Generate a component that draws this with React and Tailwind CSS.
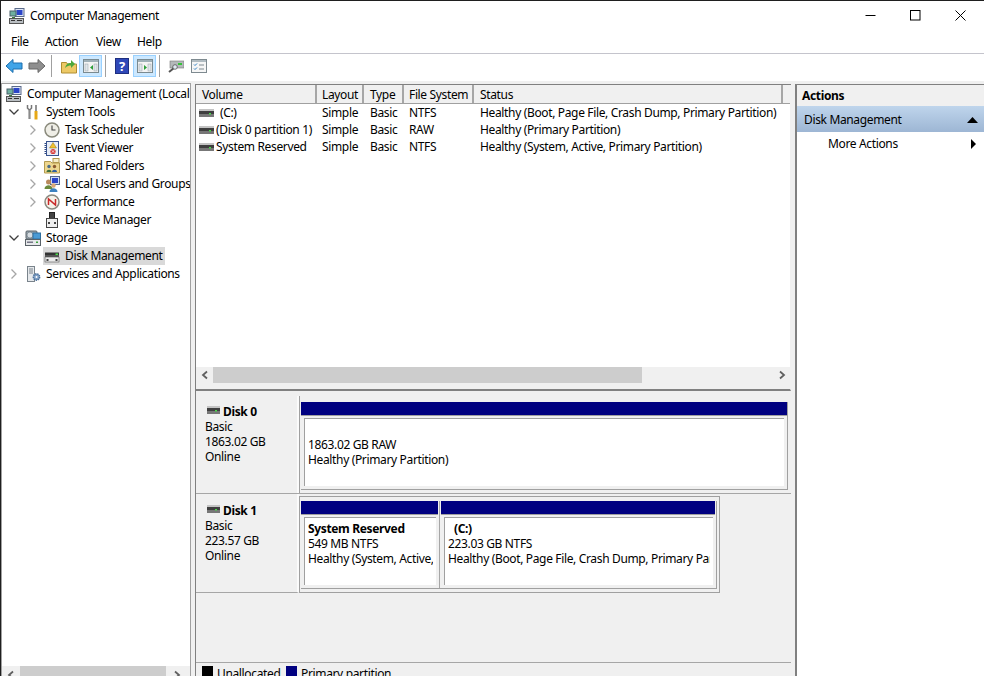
import React from "react";

const Svg = ({ w = 16, h = 16, children, className = "" }) => (
  <svg width={w} height={h} viewBox={`0 0 ${w} ${h}`} className={`shrink-0 ${className}`}>{children}</svg>
);

const CompIcon = () => (
  <Svg>
    <rect x="6" y="0.5" width="9" height="8" fill="#dfe6f5" stroke="#5a6a8a" />
    <rect x="7.5" y="2" width="6" height="5" fill="#2b45c8" />
    <rect x="1" y="3" width="6" height="5" fill="#6fb0a0" stroke="#48606a" />
    <path d="M3 9h3v2H3z" fill="#3a7d3a" />
    <rect x="0.5" y="10.5" width="14" height="5" fill="#b9bec2" stroke="#555" />
    <rect x="2" y="12" width="4" height="1" fill="#333" />
    <rect x="8" y="12" width="5" height="1" fill="#333" />
  </Svg>
);
const ToolsIcon = () => (
  <Svg>
    <path d="M2.5 1v3.2L4.5 6l2-1.8V1" fill="none" stroke="#777" strokeWidth="1.5" />
    <path d="M4.5 6v9" stroke="#8a8a8a" strokeWidth="2.2" />
    <path d="M11 1v6" stroke="#666" strokeWidth="1.4" />
    <path d="M11 7v8.5" stroke="#e6a817" strokeWidth="3" />
  </Svg>
);
const ClockIcon = () => (
  <Svg>
    <circle cx="8" cy="8" r="7" fill="#efeee6" stroke="#8a8a7c" strokeWidth="1.5" />
    <path d="M8 3.5V8h3.5" fill="none" stroke="#444" strokeWidth="1.1" />
  </Svg>
);
const ViewerIcon = () => (
  <Svg>
    <rect x="2.5" y="1.5" width="12" height="14" fill="#e8edf6" stroke="#3b568f" />
    <path d="M1.5 3v11" stroke="#2e4a86" strokeWidth="2" strokeDasharray="1 1" />
    <path d="M9 2.5l3.5 5.5h-7z" fill="#f2c230" stroke="#8f7012" strokeWidth="0.5" />
    <circle cx="9" cy="11.5" r="2.6" fill="#d73a3a" />
    <path d="M7.8 10.3l2.4 2.4m0-2.4l-2.4 2.4" stroke="#fff" strokeWidth="0.7" />
  </Svg>
);
const SharedIcon = () => (
  <Svg>
    <path d="M0.5 3.5h6l1.5 1.5h7.5v10H0.5z" fill="#eed78f" stroke="#b39a4f" />
    <rect x="9" y="0.5" width="6" height="4" fill="#f7edc8" stroke="#b39a4f" />
    <circle cx="5" cy="8.5" r="1.7" fill="#4a6d8a" />
    <path d="M2.5 14c0-3 5-3 5 0z" fill="#3d6f3d" />
    <circle cx="10.5" cy="8.5" r="1.7" fill="#8a5a30" />
    <path d="M8 14c0-3 5-3 5 0z" fill="#2f5f9f" />
  </Svg>
);
const UsersIcon = () => (
  <Svg>
    <rect x="6.5" y="0.5" width="9" height="8" fill="#cfdcf2" stroke="#54688c" />
    <rect x="8" y="2" width="6" height="5" fill="#2b45c8" />
    <circle cx="4.5" cy="6" r="2.5" fill="#b98a5c" />
    <path d="M0.5 13c0-5 8-5 8 0z" fill="#6b8a3c" />
    <circle cx="9.5" cy="9.5" r="2.2" fill="#d9a878" />
    <path d="M5.5 16c0-5 8-5 8 0z" fill="#3d83c0" />
  </Svg>
);
const PerfIcon = () => (
  <Svg>
    <circle cx="8" cy="8" r="7" fill="#f5f3ea" stroke="#8a8a80" strokeWidth="1.5" />
    <path d="M4.5 11V5l7 6V5" fill="none" stroke="#c92a2a" strokeWidth="1.5" />
  </Svg>
);
const DeviceIcon = () => (
  <Svg>
    <rect x="5.5" y="0.5" width="5" height="6" fill="#444" stroke="#222" />
    <rect x="2.5" y="6.5" width="11" height="9" fill="#eeeeee" stroke="#444" />
    <rect x="4" y="10" width="2" height="2" fill="#444" />
    <rect x="10" y="10" width="2" height="2" fill="#444" />
  </Svg>
);
const StorageIcon = () => (
  <Svg>
    <rect x="1" y="1" width="11" height="8" rx="1" fill="#9aa8b2" stroke="#5a6268" />
    <circle cx="5" cy="5" r="3" fill="#d7dde2" stroke="#66727a" strokeWidth="0.6" />
    <rect x="8" y="3" width="7.5" height="6" fill="#4a9ad4" stroke="#2f6f9f" />
    <rect x="0.5" y="9.5" width="15" height="6" fill="#e6e8ea" stroke="#5a6268" />
    <rect x="2" y="11.5" width="6" height="1.5" fill="#778" />
    <rect x="11" y="11.5" width="2" height="1.5" fill="#3fa33f" />
  </Svg>
);
const DiskIconLg = () => (
  <Svg>
    <path d="M1 4.5h14v5H1z" fill="#333" />
    <path d="M1 7h14v2H1z" fill="#555" />
    <rect x="1" y="9" width="14" height="5" fill="#ececec" stroke="#555" strokeWidth="0.6" />
    <rect x="11.5" y="5.5" width="2.5" height="1.5" fill="#4ade4a" />
    <rect x="2.5" y="11" width="2" height="2" fill="#444" />
    <rect x="11.5" y="11" width="2" height="2" fill="#444" />
  </Svg>
);
const ServicesIcon = () => (
  <Svg>
    <rect x="2.5" y="0.5" width="7" height="15" fill="#e6e9ec" stroke="#7a848c" />
    <path d="M4 3h4M4 5h4M4 7h4" stroke="#7a848c" />
    <circle cx="11.5" cy="11" r="3.2" fill="#7f9fc4" stroke="#4a6f9a" strokeDasharray="1.4 0.8" strokeWidth="1.4" />
    <circle cx="11.5" cy="11" r="1" fill="#fff" />
  </Svg>
);
const DiskSmall = ({ w = 15 }) => (
  <Svg w={w} h={8}>
    <rect x="0" y="0" width={w} height="2" fill="#c4c4c4" />
    <rect x="0" y="2" width={w} height="3" fill="#3f3f3f" />
    <rect x="0" y="5" width={w} height="3" fill="#777" />
    <rect x={w - 5} y="4" width="2" height="1.5" fill="#46d846" />
  </Svg>
);

const ChevDown = () => (
  <Svg w={12} h={12}><path d="M1.5 3.5L6 8l4.5-4.5" fill="none" stroke="#404040" strokeWidth="1.3" /></Svg>
);
const ChevRight = () => (
  <Svg w={12} h={12}><path d="M3.5 1.5L8 6l-4.5 4.5" fill="none" stroke="#a6a6a6" strokeWidth="1.3" /></Svg>
);

const TreeRow = ({ indent, chev, icon, label, selected }) => (
  <div className="flex h-[18px] items-center whitespace-nowrap">
    <div className="shrink-0" style={{ width: indent }} />
    <div className="w-[16px] shrink-0 flex justify-start">
      {chev === "down" ? <ChevDown /> : chev === "right" ? <ChevRight /> : null}
    </div>
    <div className={`flex h-[18px] items-center pl-[1px] pr-[2px] ${selected ? "bg-[#d9d9d9]" : ""}`}>
      {icon}
      <span className="pl-[5px]">{label}</span>
    </div>
  </div>
);

const cols = ["w-[121px] pl-[6px]", "w-[47px] pl-[5px]", "w-[40px] pl-[6px]", "w-[70px] pl-[5px]", "w-[309px] pl-[6px]"];

const Head = ({ i, t }) => (
  <div className={`${cols[i]} h-[18px] shrink-0 flex items-center pt-[2px] border-r-2 border-[#a6a6a6] whitespace-nowrap overflow-hidden`}>{t}</div>
);

const ListRow = ({ vol, lead, layout, type, fs, status }) => (
  <div className="flex h-[17px] items-center whitespace-nowrap">
    <div className="w-[121px] shrink-0 flex items-center pl-[3px]">
      <DiskSmall />
      <span className={lead ? "pl-[6px]" : "pl-[2px]"}>{vol}</span>
    </div>
    <div className={`${cols[1]} shrink-0`}>{layout}</div>
    <div className={`${cols[2]} shrink-0`}>{type}</div>
    <div className={`${cols[3]} shrink-0`}>{fs}</div>
    <div className={`${cols[4]} shrink-0`}>{status}</div>
  </div>
);

const Partition = ({ w, inner, name, bold, lead, size, status, divider, bar }) => (
  <div className={`${w} shrink-0 flex flex-col ${divider ? "border-r border-[#a6a6a6]" : ""}`}>
    <div className={`h-[14px] shrink-0 bg-[#000080] border-b border-[#a0a0a0] ${bar}`} />
    <div className="pt-[2px] pl-[3px] flex-1 flex flex-col">
      <div className={`${inner} h-[68px] bg-white border-t border-l border-[#a0a0a0] pt-[3px] pl-[3px] pr-[3px] whitespace-nowrap leading-[15px]`}>
        <div className="overflow-hidden">
          <div className={`h-[15px] ${bold ? "font-bold" : ""} ${lead ? "pl-[6px] font-bold" : ""}`}>{name}</div>
          <div className="h-[15px]">{size}</div>
          <div className="h-[15px]">{status}</div>
        </div>
      </div>
    </div>
  </div>
);

const DiskLabel = ({ name, size, last }) => (
  <div className={`w-[103px] shrink-0 border-r-2 border-r-[#fbfbfb] pl-[9px] leading-[15px] ${last ? "pt-[8px] border-b border-b-[#a6a6a6]" : "pt-[7px]"}`}>
    <div className="flex items-center h-[17px] font-bold">
      <div className="ml-[2px] mt-[-4px] flex"><DiskSmall w={13} /></div>
      <span className="pl-[3px]">{name}</span>
    </div>
    <div className="h-[15px] mt-[-1px]">Basic</div>
    <div className="h-[15px]">{size}</div>
    <div className="h-[15px]">Online</div>
  </div>
);

const ScrollArrow = ({ left }) => (
  <Svg w={8} h={10}>
    <path d={left ? "M6 1.5L2 5l4 3.5" : "M2 1.5L6 5 2 8.5"} fill="none" stroke="#606060" strokeWidth="1.8" />
  </Svg>
);

const ToolBtn = ({ children }) => (
  <div className="w-[23px] h-[22px] flex items-center justify-center bg-[#cce8ff] border border-[#99d1ff]">{children}</div>
);
const Sep = () => <div className="w-[1px] h-[22px] bg-[#a0a0a0]" />;

const PaneGlyph = ({ dir }) => (
  <Svg>
    <rect x="0.5" y="1.5" width="15" height="13" fill="#f4f4f4" stroke="#7a8a90" />
    <rect x="1" y="2" width="14" height="2" fill="#9fb0b8" />
    <rect x="2" y="6" width="3" height="7" fill="#e0e6ea" stroke="#9aa4aa" strokeWidth="0.5" />
    <rect x="11" y="6" width="3" height="7" fill="#e0e6ea" stroke="#9aa4aa" strokeWidth="0.5" />
    <path d={dir === "left" ? "M10 7l-3 2.5 3 2.5z" : "M7 7l3 2.5-3 2.5z"} fill="#2d9e3a" />
  </Svg>
);

export default function App() {
  return (
    <div className="w-[984px] h-[676px] overflow-hidden bg-white flex flex-col border-t border-l border-[#1f1f1f] text-black text-[12px] font-['Noto_Sans','Open_Sans',sans-serif] tracking-[-0.35px] leading-[16px]">
      {/* Title bar */}
      <div className="h-[29px] shrink-0 flex items-center pl-[8px]">
        <CompIcon />
        <span className="pl-[5px] flex-1">Computer Management</span>
        <div className="flex items-center">
          <div className="w-[45px] flex justify-center"><Svg w={11} h={11}><path d="M0.5 5.5h10" stroke="#000" /></Svg></div>
          <div className="w-[45px] flex justify-center"><Svg w={11} h={11}><rect x="0.5" y="0.5" width="9.5" height="9.5" fill="none" stroke="#000" /></Svg></div>
          <div className="w-[46px] flex justify-center pr-[2px]"><Svg w={11} h={11}><path d="M0.5 0.5l10 10m0-10l-10 10" stroke="#000" /></Svg></div>
        </div>
      </div>
      {/* Menu */}
      <div className="h-[24px] shrink-0 flex items-center pl-[10px] border-b border-[#c4c4cc] whitespace-nowrap">
        <span className="w-[34px]">File</span>
        <span className="w-[51px]">Action</span>
        <span className="w-[41px]">View</span>
        <span>Help</span>
      </div>
      {/* Toolbar */}
      <div className="h-[27px] shrink-0 flex items-center pl-[4px] pb-[3px]">
        <Svg w={18} h={16}>
          <path d="M1 8l7-6.5V5h9v6H8v3.5z" fill="#3fa4e8" stroke="#1c6fae" />
        </Svg>
        <Svg w={18} h={16} className="ml-[5px]">
          <path d="M17 8l-7-6.5V5H1v6h9v3.5z" fill="#8f8f8f" stroke="#666" />
        </Svg>
        <div className="ml-[5px]"><Sep /></div>
        <div className="ml-[9px]">
          <Svg>
            <path d="M0.5 4.5h5l1 1.5h9v9h-15z" fill="#edc966" stroke="#b08e32" />
            <path d="M4 10c1-4 3-5 6-5V2l4 4-4 4V7.5c-2 0-4 .5-6 2.5z" fill="#4ca83c" />
          </Svg>
        </div>
        <div className="ml-[2px]"><ToolBtn><PaneGlyph dir="left" /></ToolBtn></div>
        <div className="ml-[3px]"><Sep /></div>
        <div className="ml-[9px]">
          <div className="w-[14px] h-[16px] bg-[#2f48b8] border border-[#1e2f80] text-white font-bold flex items-center justify-center text-[13px]">?</div>
        </div>
        <div className="ml-[4px]"><ToolBtn><PaneGlyph dir="right" /></ToolBtn></div>
        <div className="ml-[3px]"><Sep /></div>
        <div className="ml-[8px]">
          <Svg>
            <rect x="2" y="3" width="14" height="7" fill="#b4b8ba" stroke="#777" strokeWidth="0.6" />
            <rect x="10" y="5" width="4" height="2" fill="#35c23a" />
            <path d="M1 14l5-4" stroke="#555" strokeWidth="2" />
            <circle cx="7" cy="9" r="2.3" fill="#dfe9f2" stroke="#555" strokeWidth="0.8" />
          </Svg>
        </div>
        <div className="ml-[7px]">
          <Svg>
            <rect x="0.5" y="1.5" width="15" height="13" fill="#f6f6f6" stroke="#7e8a90" />
            <path d="M1 3h14" stroke="#9aa8b0" strokeWidth="1.5" />
            <path d="M3 6.5l1 1 2-2M3 10.5l1 1 2-2" fill="none" stroke="#2d7fc2" />
            <path d="M8 7h5M8 11h5" stroke="#7e8a90" />
          </Svg>
        </div>
      </div>

      {/* Main */}
      <div className="flex-1 min-h-0 flex bg-[#f0f0f0] pt-[2px]">
        {/* Tree */}
        <div className="w-[190px] shrink-0 flex flex-col bg-white border-t border-x border-[#a0a0a0] overflow-hidden whitespace-nowrap">
          <div className="flex-1 min-h-0 pt-[1px] overflow-hidden">
            <div className="flex h-[18px] items-center pl-[4px] whitespace-nowrap">
              <CompIcon />
              <span className="pl-[5px]">Computer Management (Local</span>
            </div>
            <TreeRow indent={6} chev="down" icon={<ToolsIcon />} label="System Tools" />
            <TreeRow indent={25} chev="right" icon={<ClockIcon />} label="Task Scheduler" />
            <TreeRow indent={25} chev="right" icon={<ViewerIcon />} label="Event Viewer" />
            <TreeRow indent={25} chev="right" icon={<SharedIcon />} label="Shared Folders" />
            <TreeRow indent={25} chev="right" icon={<UsersIcon />} label="Local Users and Groups" />
            <TreeRow indent={25} chev="right" icon={<PerfIcon />} label="Performance" />
            <TreeRow indent={25} icon={<DeviceIcon />} label="Device Manager" />
            <TreeRow indent={6} chev="down" icon={<StorageIcon />} label="Storage" />
            <TreeRow indent={25} icon={<DiskIconLg />} label="Disk Management" selected />
            <TreeRow indent={6} chev="right" icon={<ServicesIcon />} label="Services and Applications" />
          </div>
          <div className="h-[17px] shrink-0 bg-[#f0f0f0] flex items-center mb-[-7px]">
            <div className="w-[18px] flex justify-center"><ScrollArrow left /></div>
            <div className="w-[146px] h-[17px] bg-[#cdcdcd]" />
            <div className="w-[22px] flex justify-center"><ScrollArrow /></div>
          </div>
        </div>

        <div className="w-[4px] shrink-0" />

        {/* Middle */}
        <div className="w-[596px] shrink-0 flex flex-col border-t border-l border-[#808080] mt-[1px]">
          <div className="h-[306px] shrink-0 flex flex-col bg-white border-b-2 border-[#808080] border-r border-r-[#f0f0f0]">
            <div className="flex h-[19px] shrink-0 bg-[#f0f0f0] border-b border-[#a0a0a0]">
              <Head i={0} t="Volume" />
              <Head i={1} t="Layout" />
              <Head i={2} t="Type" />
              <Head i={3} t="File System" />
              <Head i={4} t="Status" />
            </div>
            <div className="flex-1 min-h-0">
              <ListRow vol="(C:)" lead layout="Simple" type="Basic" fs="NTFS" status="Healthy (Boot, Page File, Crash Dump, Primary Partition)" />
              <ListRow vol="(Disk 0 partition 1)" layout="Simple" type="Basic" fs="RAW" status="Healthy (Primary Partition)" />
              <ListRow vol="System Reserved" layout="Simple" type="Basic" fs="NTFS" status="Healthy (System, Active, Primary Partition)" />
            </div>
            <div className="h-[22px] shrink-0 bg-[#f0f0f0] flex items-start">
              <div className="h-[16px] w-full flex items-center">
                <div className="w-[17px] flex justify-center"><ScrollArrow left /></div>
                <div className="w-[429px] h-[16px] bg-[#cdcdcd]" />
                <div className="flex-1 flex justify-end pr-[4px]"><ScrollArrow /></div>
              </div>
            </div>
          </div>
          {/* Graphical */}
          <div className="flex-1 min-h-0 flex flex-col bg-[#f0f0f0] pt-[5px]">
            <div className="h-[98px] shrink-0 flex border-b border-[#a6a6a6]">
              <DiskLabel name="Disk 0" size="1863.02 GB" />
              <div className="pt-[6px] pl-[1px] border-l border-[#a0a0a0]">
                <div className="h-[88px] w-[487px] flex border-r border-b border-[#a0a0a0]">
                  <Partition w="w-[486px]" inner="w-[480px]" bar="" name="" size="1863.02 GB RAW" status="Healthy (Primary Partition)" />
                </div>
              </div>
            </div>
            <div className="h-[99px] shrink-0 flex">
              <DiskLabel last name="Disk 1" size="223.57 GB" />
              <div className="mt-[2px] h-[97px] w-[421px] pl-[1px] pt-[4px] border border-[#a0a0a0]">
                <div className="h-[88px] w-[416px] flex border-r border-b border-[#a0a0a0]">
                  <Partition w="w-[139px]" inner="w-[132px]" divider bar="mr-[1px]" bold name="System Reserved" size="549 MB NTFS" status="Healthy (System, Active, Primary Partition)" />
                  <Partition w="w-[276px]" inner="w-[269px] ml-[1px]" bar="ml-[1px] mr-[1px]" lead name="(C:)" size="223.03 GB NTFS" status="Healthy (Boot, Page File, Crash Dump, Primary Partition)" />
                </div>
              </div>
            </div>
            <div className="flex-1" />
            <div className="h-[14px] shrink-0 border-t border-[#a6a6a6] flex items-start pl-[6px] pt-[3px] whitespace-nowrap">
              <div className="w-[11px] h-[11px] bg-black" />
              <span className="pl-[4px] w-[73px]">Unallocated</span>
              <div className="w-[11px] h-[11px] bg-[#000080]" />
              <span className="pl-[4px]">Primary partition</span>
            </div>
          </div>
        </div>

        <div className="w-[4px] shrink-0" />

        {/* Actions */}
        <div className="flex-1 min-w-0 flex flex-col bg-white border-t border-l-2 border-[#808080] mt-[1px]">
          <div className="h-[21px] shrink-0 bg-[#f0f0f0] flex items-center pl-[5px] font-bold">Actions</div>
          <div className="h-[26px] shrink-0 bg-gradient-to-b from-[#bfd5ec] to-[#9db6d4] flex items-center pl-[7px] pr-[6px] pt-[1px] justify-between">
            <span>Disk Management</span>
            <Svg w={11} h={6}><path d="M5.5 0L11 6H0z" fill="#000" /></Svg>
          </div>
          <div className="h-[24px] shrink-0 flex items-center pl-[31px] pr-[8px] justify-between">
            <span>More Actions</span>
            <Svg w={5} h={10}><path d="M0 0l5 5-5 5z" fill="#000" /></Svg>
          </div>
        </div>
      </div>
    </div>
  );
}
